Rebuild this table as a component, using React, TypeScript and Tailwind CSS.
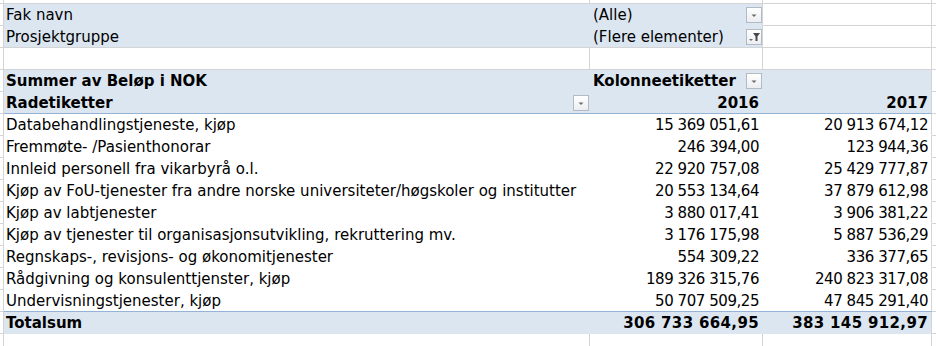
import React from "react";

const FONT = "[font-family:'DejaVu_Sans',sans-serif]";

function DropBtn({ filter = false }: { filter?: boolean }) {
  return (
    <div className="w-[16px] h-[16px] mb-[2px] shrink-0 border border-[#b4bac3] bg-gradient-to-b from-white to-[#eceef1]">
      <svg width="14" height="14" viewBox="0 0 14 14" className="block">
        {filter ? (
          <>
            <polygon points="6,3 13,3 10.5,6.5 10.5,11 8.5,11 8.5,6.5" fill="#4a4a4a" />
            <polygon points="2,9 6,9 4,11" fill="#6a6a6a" />
          </>
        ) : (
          <polygon points="4.5,6.5 9.5,6.5 7,9" fill="#6a6a6a" />
        )}
      </svg>
    </div>
  );
}

const LeftCell = () => <div className="w-[4px] shrink-0 border-r border-b border-[#d4d4d4]" />;
const RightCell = () => <div className="flex-1 border-b border-[#d4d4d4]" />;

function Row({ children }: { children: React.ReactNode }) {
  return (
    <div className="flex h-[22px]">
      <LeftCell />
      {children}
      <RightCell />
    </div>
  );
}

const txt = "text-[15px] leading-[17px] pb-[1px] text-black whitespace-nowrap";
const num = "tracking-[-0.45px]";
const bnum = "tracking-[0.35px]";

const data: [string, string, string][] = [
  ["Databehandlingstjeneste, kjøp", "15 369 051,61", "20 913 674,12"],
  ["Fremmøte- /Pasienthonorar", "246 394,00", "123 944,36"],
  ["Innleid personell fra vikarbyrå o.l.", "22 920 757,08", "25 429 777,87"],
  ["Kjøp av FoU-tjenester fra andre norske universiteter/høgskoler og institutter", "20 553 134,64", "37 879 612,98"],
  ["Kjøp av labtjenester", "3 880 017,41", "3 906 381,22"],
  ["Kjøp av tjenester til organisasjonsutvikling, rekruttering mv.", "3 176 175,98", "5 887 536,29"],
  ["Regnskaps-, revisjons- og økonomitjenester", "554 309,22", "336 377,65"],
  ["Rådgivning og konsulenttjenster, kjøp", "189 326 315,76", "240 823 317,08"],
  ["Undervisningstjenester, kjøp", "50 707 509,25", "47 845 291,40"],
];

export default function App() {
  return (
    <div className={`w-[936px] h-[346px] bg-white overflow-hidden ${FONT}`}>
      {/* top partial row */}
      <div className="flex h-[4px]">
        <div className="w-[4px] shrink-0 border-r border-b border-[#d4d4d4]" />
        <div className="w-[586px] shrink-0 border-r border-b border-[#d4d4d4]" />
        <div className="w-[173px] shrink-0 border-r border-b border-[#d4d4d4]" />
        <div className="w-[169px] shrink-0 border-r border-b border-[#d4d4d4]" />
        <div className="flex-1 border-b border-[#d4d4d4]" />
      </div>

      {/* filter rows */}
      {[
        ["Fak navn", "(Alle)", false],
        ["Prosjektgruppe", "(Flere elementer)", true],
      ].map(([a, b, f], i) => (
        <Row key={i}>
          <div
            className={`w-[759px] shrink-0 flex bg-[#dce6f1] border-r border-b border-r-[#d4d4d4] ${
              i === 1 ? "border-b-[#d4d4d4]" : "border-b-[#dce6f1]"
            }`}
          >
            <div className={`w-[586px] shrink-0 flex items-end pl-[2px] ${txt}`}>{a as string}</div>
            <div className="flex-1 flex items-end justify-between pl-[3px] pr-0">
              <span className={txt}>{b as string}</span>
              <DropBtn filter={f as boolean} />
            </div>
          </div>
          <div className="w-[169px] shrink-0 border-r border-b border-[#d4d4d4]" />
        </Row>
      ))}

      {/* empty row */}
      <Row>
        <div className="w-[586px] shrink-0 border-r border-b border-[#d4d4d4]" />
        <div className="w-[173px] shrink-0 border-r border-b border-[#d4d4d4]" />
        <div className="w-[169px] shrink-0 border-r border-b border-[#d4d4d4]" />
      </Row>

      {/* header row 1 */}
      <Row>
        <div className="w-[928px] shrink-0 flex bg-[#dce6f1] border-r border-b border-r-[#d4d4d4] border-b-[#dce6f1]">
          <div className={`w-[586px] shrink-0 flex items-end pl-[2px] font-bold ${txt}`}>Summer av Beløp i NOK</div>
          <div className="w-[173px] shrink-0 flex items-end justify-between pl-[3px] pr-[1px]">
            <span className={`font-bold ${txt}`}>Kolonneetiketter</span>
            <DropBtn />
          </div>
          <div className="flex-1" />
        </div>
      </Row>

      {/* header row 2 */}
      <Row>
        <div className="w-[928px] shrink-0 flex bg-[#dce6f1] border-r border-b border-r-[#d4d4d4] border-b-[#95b3d7]">
          <div className="w-[586px] shrink-0 flex items-end justify-between pl-[2px] pr-[1px]">
            <span className={`font-bold ${txt}`}>Radetiketter</span>
            <DropBtn />
          </div>
          <div className={`w-[173px] shrink-0 flex items-end justify-end pr-[4px] font-bold ${txt}`}>2016</div>
          <div className={`flex-1 flex items-end justify-end pr-[3px] font-bold ${txt}`}>2017</div>
        </div>
      </Row>

      {/* data rows */}
      {data.map(([name, a, b], i) => (
        <Row key={name}>
          <div
            className={`w-[928px] shrink-0 flex bg-white border-r border-b border-r-[#d4d4d4] ${
              i === data.length - 1 ? "border-b-[#95b3d7]" : "border-b-white"
            }`}
          >
            <div className={`w-[586px] shrink-0 flex items-end pl-[2px] ${txt}`}>{name}</div>
            <div className={`w-[173px] shrink-0 flex items-end justify-end pr-[4px] ${num} ${txt}`}>{a}</div>
            <div className={`flex-1 flex items-end justify-end pr-[3px] ${num} ${txt}`}>{b}</div>
          </div>
        </Row>
      ))}

      {/* total row */}
      <Row>
        <div className="w-[928px] shrink-0 flex bg-[#dce6f1] border-r border-b border-r-[#d4d4d4] border-b-[#dce6f1]">
          <div className={`w-[586px] shrink-0 flex items-end pl-[2px] font-bold ${txt}`}>Totalsum</div>
          <div className={`w-[173px] shrink-0 flex items-end justify-end pr-[4px] font-bold ${bnum} ${txt}`}>306 733 664,95</div>
          <div className={`flex-1 flex items-end justify-end pr-[3px] font-bold ${bnum} ${txt}`}>383 145 912,97</div>
        </div>
      </Row>

      {/* bottom partial */}
      <div className="flex h-[14px]">
        <div className="w-[4px] shrink-0 border-r border-[#d4d4d4]" />
        <div className="w-[586px] shrink-0 border-r border-[#d4d4d4]" />
        <div className="w-[173px] shrink-0 border-r border-[#d4d4d4]" />
        <div className="w-[169px] shrink-0 border-r border-[#d4d4d4]" />
        <div className="flex-1" />
      </div>
    </div>
  );
}
